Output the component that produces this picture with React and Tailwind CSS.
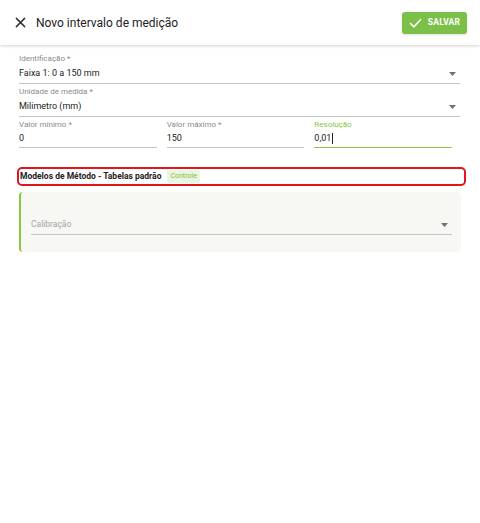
import React from 'react';

const Caret = () => (
  <svg width="7" height="4" viewBox="0 0 7 4" className="shrink-0">
    <path d="M0 0h7L3.5 4z" fill="#707070" />
  </svg>
);

const Field = ({ label, value, select, active, short }) => (
  <div className="flex flex-col">
    <span className={`text-[8px] leading-[10px] ${active ? 'text-[#8cc63f]' : 'text-[#8a8a8a]'}`}>{label}</span>
    <div
      className={`flex items-center justify-between pr-[4px] ${short ? 'h-[18px]' : 'h-[20px]'} ${
        active ? 'border-b-[1.5px] border-[#8cc63f]' : 'border-b border-[#c4c4c4]'
      }`}
    >
      <span className="text-[9px] text-[#222] flex items-center">
        {value}
        {active && <span className="inline-block w-px h-[11px] bg-[#222] ml-px" />}
      </span>
      {select && <Caret />}
    </div>
  </div>
);

const App = () => {
  return (
    <div className="w-[480px] h-[523px] bg-white font-['Roboto',sans-serif] overflow-hidden">
      <header className="h-[45px] flex items-center justify-between pl-[15px] pr-[13px] shadow-[0_1px_3px_rgba(0,0,0,0.18)] relative">
        <div className="flex items-center gap-[10px]">
          <svg width="11" height="11" viewBox="0 0 12 12">
            <path d="M1.5 1.5l9 9M10.5 1.5l-9 9" stroke="#333" strokeWidth="1.6" strokeLinecap="round" />
          </svg>
          <h1 className="text-[12px] text-[#222]">Novo intervalo de medição</h1>
        </div>
        <button className="h-[22px] w-[65px] rounded-[3px] bg-[#7cc04a] text-white flex items-center justify-center gap-[6px] text-[8.5px] font-bold tracking-wide shadow-sm">
          <svg width="13" height="10" viewBox="0 0 13 10">
            <path d="M1 5l3.8 3.8L12 1.2" stroke="white" strokeWidth="1.5" fill="none" />
          </svg>
          SALVAR
        </button>
      </header>

      <main className="px-[19px] pt-[9px]">
        <div className="mr-[1px] flex flex-col gap-[3px]">
          <Field label="Identificação *" value="Faixa 1: 0 a 150 mm" select />
          <Field label="Unidade de medida *" value="Milimetro (mm)" select />
        </div>
        <div className="grid grid-cols-3 gap-[10px] pr-[9px] mt-[3px]">
          <Field label="Valor mínimo *" value="0" short />
          <Field label="Valor máximo *" value="150" short />
          <Field label="Resolução" value="0,01" active short />
        </div>

        <div className="mt-[19px] ml-[-2px] mr-[-5px] h-[19px] border-2 border-[#e3161e] rounded-[5px] flex items-center gap-[6px] px-[1px]">
          <span className="text-[8.5px] font-bold text-[#222]">Modelos de Método - Tabelas padrão</span>
          <span className="text-[7px] text-[#7cc04a] bg-[#ebf5e1] px-[3px] py-px rounded-[2px]">Controle</span>
        </div>

        <div className="mt-[6px] h-[60px] bg-[#f7f8f4] rounded-[4px] border-l-[2.5px] border-[#8cc63f] pl-[10px] pr-[9px] flex flex-col justify-end pb-[17px]">
          <div className="flex items-center justify-between h-[20px] border-b border-[#c4c4c4] pr-[4px]">
            <span className="text-[8.5px] text-[#a5a5a5]">Calibração</span>
            <Caret />
          </div>
        </div>
      </main>
    </div>
  );
};

export default App;
